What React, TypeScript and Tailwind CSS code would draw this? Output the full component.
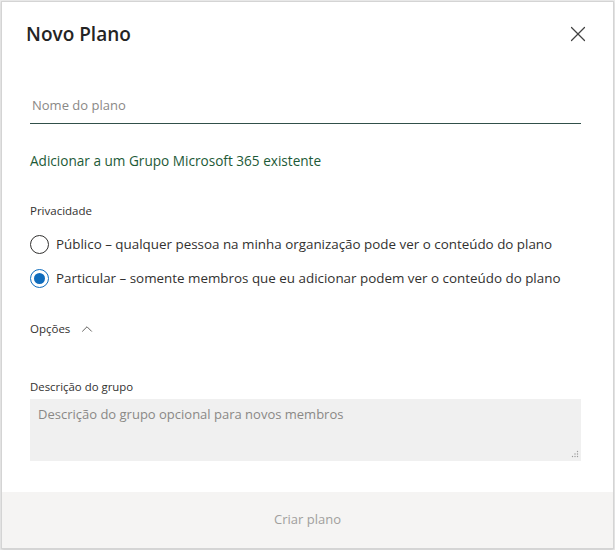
import { X, ChevronUp } from "lucide-react";

export default function App() {
  return (
    <div
      className="w-[615px] h-[550px] bg-[#ececec] p-[1px]"
      style={{ fontFamily: '"Open Sans", "Noto Sans", sans-serif' }}
    >
      <div className="h-full w-full bg-white border border-[#d4d4d4] flex flex-col shadow-sm">
        <div className="flex items-center justify-between pl-[24px] pr-[22px] pt-[18px]">
          <h1 className="text-[19px] font-semibold text-[#242424] leading-[28px]">Novo Plano</h1>
          <X className="w-[26px] h-[26px] text-[#424242]" strokeWidth={1.1} />
        </div>

        <div className="pl-[28px] pr-[32px] flex-1">
          <div className="mt-[44px] border-b border-[#31504a] pb-[7px] pl-[2px]">
            <span className="text-[13px] text-[#8a8886] leading-[18px]">Nome do plano</span>
          </div>

          <p className="mt-[27px] text-[13.6px] text-[#1d5a37] leading-[20px]">
            Adicionar a um Grupo Microsoft 365 existente
          </p>

          <p className="mt-[31px] text-[11.5px] text-[#323130] leading-[18px]">Privacidade</p>

          <div className="mt-[14px] flex flex-col gap-[14px]">
            <label className="flex items-center gap-[7px]">
              <span className="w-[19px] h-[19px] rounded-full border border-[#323130] bg-white" />
              <span className="text-[13.4px] text-[#323130] leading-[20px]">
                Público – qualquer pessoa na minha organização pode ver o conteúdo do plano
              </span>
            </label>
            <label className="flex items-center gap-[7px]">
              <span className="w-[19px] h-[19px] rounded-full border border-[#0f6cbd] bg-white flex items-center justify-center">
                <span className="w-[11px] h-[11px] rounded-full bg-[#0f6cbd]" />
              </span>
              <span className="text-[13.4px] text-[#323130] leading-[20px]">
                Particular – somente membros que eu adicionar podem ver o conteúdo do plano
              </span>
            </label>
          </div>

          <div className="mt-[32px] flex items-center gap-[8px]">
            <span className="text-[11.5px] text-[#323130] leading-[18px]">Opções</span>
            <ChevronUp className="w-[18px] h-[18px] text-[#605e5c]" strokeWidth={1.3} />
          </div>

          <p className="mt-[40px] text-[11.4px] text-[#323130] leading-[18px]">Descrição do grupo</p>

          <div className="mt-[3px] relative h-[62px] bg-[#f0f0f0] px-[8px] pt-[2px]">
            <span className="text-[13px] text-[#8a8886] leading-[20px]">
              Descrição do grupo opcional para novos membros
            </span>
            <svg className="absolute right-[2px] bottom-[3px]" width="8" height="8" viewBox="0 0 8 8">
              <circle cx="6.5" cy="1.5" r="0.7" fill="#9a9a9a" />
              <circle cx="4" cy="4" r="0.7" fill="#9a9a9a" />
              <circle cx="6.5" cy="4" r="0.7" fill="#9a9a9a" />
              <circle cx="1.5" cy="6.5" r="0.7" fill="#9a9a9a" />
              <circle cx="4" cy="6.5" r="0.7" fill="#9a9a9a" />
              <circle cx="6.5" cy="6.5" r="0.7" fill="#9a9a9a" />
            </svg>
          </div>
        </div>

        <div className="h-[56px] bg-[#f5f4f3] flex items-center justify-center">
          <span className="text-[13px] text-[#a19f9d]">Criar plano</span>
        </div>
      </div>
    </div>
  );
}
